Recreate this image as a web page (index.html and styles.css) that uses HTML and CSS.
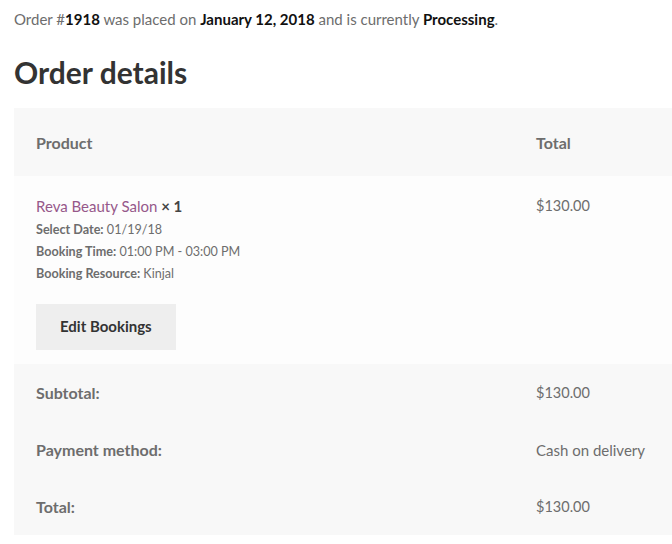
FILE: index.html
```html
<!DOCTYPE html>
<html lang="en">
<head>
    <meta charset="UTF-8">
    <meta name="viewport" content="width=device-width, initial-scale=1.0">
    <title>Order #1918</title>
    <link rel="stylesheet" href="styles.css">
</head>
<body>
    <div class="page">
        <p class="order-status">
            Order #<mark>1918</mark> was placed on <mark>January 12, 2018</mark> and is currently <mark>Processing</mark>.
        </p>

        <h2 class="section-title">Order details</h2>

        <table class="order-table">
            <thead>
                <tr>
                    <th class="col-product">Product</th>
                    <th class="col-total">Total</th>
                </tr>
            </thead>
            <tbody>
                <tr class="order-item">
                    <td class="col-product">
                        <a href="#" class="item-name">Reva Beauty Salon</a> <strong class="qty">&times;&nbsp;1</strong>
                        <ul class="item-meta">
                            <li><strong>Select Date:</strong> 01/19/18</li>
                            <li><strong>Booking Time:</strong> 01:00 PM - 03:00 PM</li>
                            <li><strong>Booking Resource:</strong> Kinjal</li>
                        </ul>
                        <a href="#" class="btn">Edit Bookings</a>
                    </td>
                    <td class="col-total price">$130.00</td>
                </tr>
            </tbody>
            <tfoot>
                <tr>
                    <th>Subtotal:</th>
                    <td class="price">$130.00</td>
                </tr>
                <tr>
                    <th>Payment method:</th>
                    <td>Cash on delivery</td>
                </tr>
                <tr>
                    <th>Total:</th>
                    <td class="price">$130.00</td>
                </tr>
            </tfoot>
        </table>
    </div>
</body>
</html>
```

FILE: styles.css
```css
body {
    margin: 0;
    background-color: #fff;
    color: #6d6d6d;
    font-family: Lato, "Open Sans", sans-serif;
    font-size: 15px;
    overflow: hidden;
}

.page {
    padding-left: 14px;
}

.order-status {
    margin: 0;
    padding-top: 7px;
    line-height: 24px;
}

.order-status mark {
    background: transparent;
    color: #111;
    font-weight: 700;
}

.section-title {
    margin: 23px 0 18px;
    font-size: 30px;
    line-height: 36px;
    font-weight: 700;
    color: #333;
}

.order-table {
    width: 100%;
    table-layout: fixed;
    border-collapse: collapse;
    border-spacing: 0;
}

.order-table th,
.order-table td {
    text-align: left;
    vertical-align: top;
    padding: 0 22px;
    white-space: nowrap;
}

.order-table th {
    font-size: 16px;
    font-weight: 700;
}

.order-table thead th {
    background-color: #f8f8f8;
    height: 68px;
    vertical-align: middle;
}

.order-table .col-product {
    width: 456px;
}

.order-item td {
    background-color: #fdfdfd;
    padding-top: 18px;
    padding-bottom: 14px;
    line-height: 24px;
}

.price {
    font-size: 14.5px;
}

.item-name {
    color: #96588a;
    text-decoration: none;
}

.qty {
    color: #444;
}

.item-meta {
    list-style: none;
    margin: 1px 0 19px;
    padding: 0;
    font-size: 12.6px;
    line-height: 22px;
}

.item-meta strong {
    font-weight: 700;
}

.btn {
    display: inline-block;
    background-color: #eee;
    color: #333;
    font-weight: 700;
    font-size: 15px;
    text-decoration: none;
    padding: 11px 24px 12px;
    line-height: 23px;
}

.order-table tfoot th,
.order-table tfoot td {
    background-color: #f8f8f8;
    height: 57px;
    vertical-align: middle;
    padding-top: 0;
    padding-bottom: 0;
}
```
